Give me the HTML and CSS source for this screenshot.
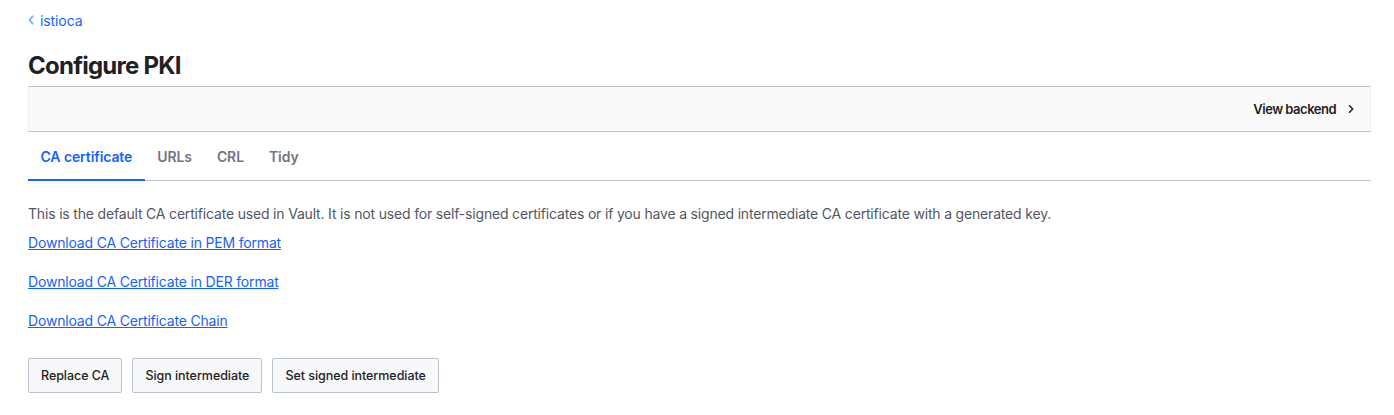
FILE: index.html
```html
<!DOCTYPE html>
<html>
<head>
<meta charset="utf-8">
<link rel="stylesheet" href="styles.css">
</head>
<body>
<div class="page">
  <nav class="crumbs">
    <a class="crumb" href="#">
      <svg class="crumb-icon" width="6" height="10" viewBox="0 0 6 10"><path d="M4.6 1.4 1.6 5l3 3.6" fill="none" stroke="#8ab4fb" stroke-width="2" stroke-linecap="round" stroke-linejoin="round"/></svg>
      <span>istioca</span>
    </a>
  </nav>
  <h1 class="title">Configure PKI</h1>
  <div class="toolbar">
    <a class="toolbar-link" href="#">View backend
      <svg class="toolbar-chev" width="8" height="10" viewBox="0 0 8 10"><path d="M2.5 1.8 5.7 5 2.5 8.2" fill="none" stroke="#1f2124" stroke-width="1.6" stroke-linecap="round" stroke-linejoin="round"/></svg>
    </a>
  </div>
  <div class="tabs">
    <a class="tab active" href="#">CA certificate</a>
    <a class="tab" href="#">URLs</a>
    <a class="tab" href="#">CRL</a>
    <a class="tab" href="#">Tidy</a>
  </div>
  <p class="desc">This is the default CA certificate used in Vault. It is not used for self-signed certificates or if you have a signed intermediate CA certificate with a generated key.</p>
  <div class="links">
    <a class="dl" href="#">Download CA Certificate in PEM format</a>
    <a class="dl" href="#">Download CA Certificate in DER format</a>
    <a class="dl" href="#">Download CA Certificate Chain</a>
  </div>
  <div class="actions">
    <button class="btn">Replace CA</button>
    <button class="btn">Sign intermediate</button>
    <button class="btn">Set signed intermediate</button>
  </div>
</div>
</body>
</html>
```

FILE: styles.css
```css
* { box-sizing: border-box; }
html, body { margin: 0; padding: 0; background: #fff; }
body {
  font-family: Inter, "Noto Sans", "Liberation Sans", sans-serif;
  color: #1f2124;
  -webkit-font-smoothing: antialiased;
}
.page { padding: 10px 23px 0 28px; }
.crumbs { height: 20px; display: flex; align-items: center; }
.crumb { display: flex; align-items: center; gap: 6px; color: #1563ff; text-decoration: none; font-size: 14px; letter-spacing: -0.1px; }
.crumb-icon { display: block; }
.title {
  margin: 0;
  padding-top: 21px;
  font-size: 24px;
  font-weight: 700;
  line-height: 30px;
  color: #1f2124;
  height: 56px;
  letter-spacing: -0.75px;
}
.toolbar {
  height: 46px;
  background: #fafafa;
  border-top: 1px solid #bac1cc;
  border-bottom: 1px solid #bac1cc;
  border-left: 1px solid #ebeef2;
  border-right: 1px solid #ebeef2;
  display: flex;
  justify-content: flex-end;
  align-items: center;
  padding-right: 15px;
}
.toolbar-link {
  display: flex; align-items: center; gap: 11px;
  color: #1f2124; text-decoration: none;
  font-size: 13px; font-weight: 600;
  letter-spacing: -0.5px;
}
.toolbar-chev { display: block; }
.tabs {
  display: flex;
  height: 49px;
  border-bottom: 1px solid #bac1cc;
}
.tab {
  display: flex; align-items: center;
  padding: 1px 12.5px 0;
  font-size: 14px; font-weight: 600;
  color: #6f7682;
  text-decoration: none;
  border-bottom: 2px solid transparent;
  margin-bottom: -1px;
  letter-spacing: -0.1px;
}
.tab.active { color: #1563ff; border-bottom-color: #1563ff; }
.desc {
  margin: 24px 0 0;
  font-size: 14px;
  line-height: 18px;
  color: #525761;
  letter-spacing: -0.18px;
}
.links { display: flex; flex-direction: column; align-items: flex-start; gap: 21px; margin-top: 11px; }
.dl { font-size: 14px; line-height: 18px; color: #1563ff; text-decoration: underline; letter-spacing: -0.18px; }
.actions { display: flex; gap: 10px; margin-top: 28px; }
.btn {
  font-family: inherit;
  font-size: 12.5px;
  font-weight: 500;
  letter-spacing: -0.05px;
  color: #1f2124;
  background: #f7f8fa;
  border: 1px solid #bac1cc;
  border-radius: 2px;
  height: 35px;
  padding: 0 12px;
  box-shadow: 0 3px 1px -1px rgba(186,193,204,0.35);
}
```
